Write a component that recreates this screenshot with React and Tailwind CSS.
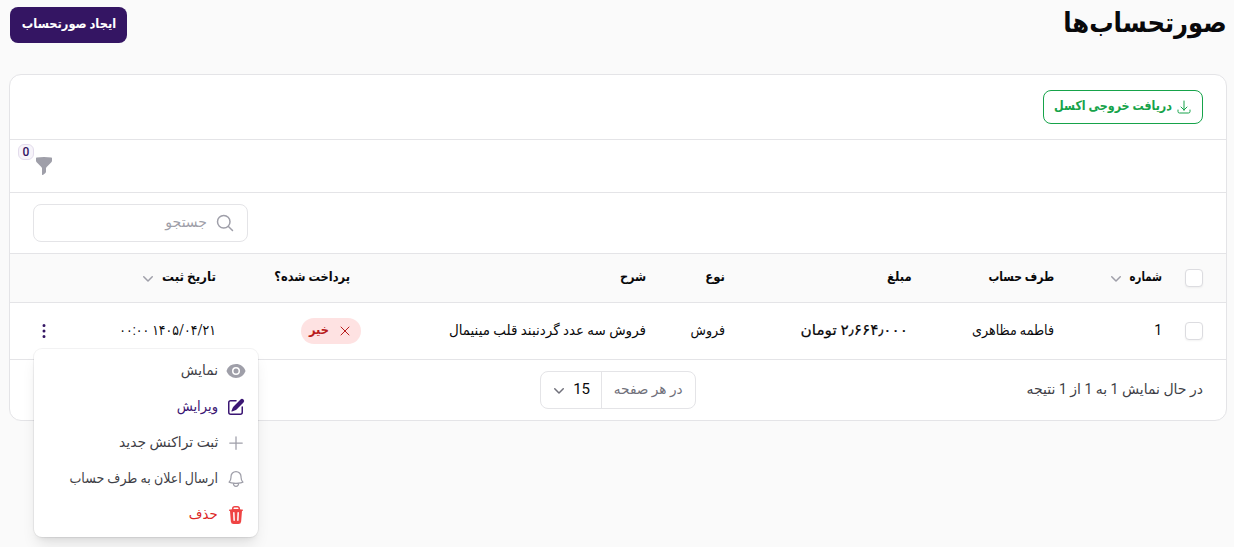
import React from 'react';
import {
    HiMiniFunnel, HiOutlineMagnifyingGlass, HiOutlinePlus, HiOutlineXMark, HiMiniChevronDown, HiOutlineBell,
    HiMiniEye, HiMiniEllipsisVertical, HiMiniPencilSquare, HiMiniTrash, HiOutlineArrowDownTray,
} from 'react-icons/hi2';

// One line of persian text, slightly condensed through scale-x classes
const Txt = ({ children, className = '' }) => (
    <span className={`block origin-right -translate-y-px whitespace-nowrap ${className}`}>{children}</span>
);

const columns = [
    { label: 'شماره', sortable: true, width: 'w-[108px]', text: 'w-8 scale-x-[0.78]' },
    { label: 'طرف حساب', width: 'w-[142px]', text: 'scale-x-[0.83]' },
    { label: 'مبلغ', width: 'w-[187px]', text: 'scale-x-[0.89]' },
    { label: 'نوع', width: 'w-[79px]', text: 'scale-x-[0.9]' },
    { label: 'شرح', width: 'w-[296px]', text: 'scale-x-[0.87]' },
    { label: 'پرداخت شده؟', width: 'w-[134px]', text: 'scale-x-[0.88]' },
    { label: 'تاریخ ثبت', sortable: true, width: 'w-[120px]', text: 'w-[54px] scale-x-[0.92]' },
];

const actions = [
    { label: 'نمایش', icon: HiMiniEye, color: 'text-zinc-700', iconColor: 'text-zinc-400', text: 'scale-x-[0.98]' },
    { label: 'ویرایش', icon: HiMiniPencilSquare, color: 'text-[#3b1673]', iconColor: 'text-[#3b1673]', text: 'scale-x-[0.94]' },
    { label: 'ثبت تراکنش جدید', icon: HiOutlinePlus, color: 'text-zinc-700', iconColor: 'text-zinc-400', text: 'scale-x-[0.99]' },
    { label: 'ارسال اعلان به طرف حساب', icon: HiOutlineBell, color: 'text-zinc-700', iconColor: 'text-zinc-400', text: 'scale-x-[0.9]' },
    { label: 'حذف', icon: HiMiniTrash, color: 'text-[#dc2626]', iconColor: 'text-[#ef4444]', text: 'scale-x-[0.94]' },
];

const Checkbox = () => <span className="block h-[18px] w-[18px] rounded border border-[#dcdce0] bg-white shadow-xs" />;

const App = () => {
    return (
        <div dir="rtl" className="relative h-[547px] overflow-hidden bg-zinc-50 font-['Roboto','DejaVu_Sans',sans-serif] text-[14px] text-zinc-950">
            <header className="flex h-[74px] items-start justify-between pr-[7px] pl-[10px]">
                <h1 className="pt-1 text-[27px] font-bold"><Txt className="scale-x-90">صورتحساب‌ها</Txt></h1>
                <button className="mt-[7px] flex h-9 w-[117px] items-center rounded-lg bg-[#341563] pr-[11px] text-[13px] font-bold text-white">
                    <Txt className="scale-x-[0.88]">ایجاد صورتحساب</Txt>
                </button>
            </header>

            <main className="mr-[7px] ml-[9px] h-[347px] overflow-hidden rounded-xl border border-zinc-200 bg-white">
                <div className="flex h-[65px] items-center border-b border-zinc-200 pr-[23px]">
                    <button className="flex h-[34px] w-[160px] items-center gap-1 rounded-lg border border-[#16a34a] pr-[10px] text-[13px] font-bold text-[#16a34a]">
                        <HiOutlineArrowDownTray className="h-4 w-4 shrink-0" />
                        <Txt className="w-[117px] scale-x-[0.857]">دریافت خروجی اکسل</Txt>
                    </button>
                </div>

                <div className="flex h-[53px] items-center justify-end border-b border-zinc-200 pl-6">
                    <span className="relative">
                        <HiMiniFunnel className="h-5 w-5 text-zinc-400" />
                        <span className="absolute -top-3 -left-4 flex h-4 w-4 items-center justify-center rounded-md border border-[#e3dcec] bg-[#f7f4fa] pb-px text-xs font-medium text-[#341563]">0</span>
                    </span>
                </div>

                <div className="flex h-[61px] items-center justify-end border-b border-zinc-200 pl-[23px]">
                    <div className="flex h-[38px] w-[215px] items-center gap-2 rounded-lg border border-zinc-200 pr-3 text-zinc-400">
                        <HiOutlineMagnifyingGlass className="h-5 w-5" strokeWidth={1.8} />
                        <Txt>جستجو</Txt>
                    </div>
                </div>

                <div className="flex h-[49px] items-center border-b border-zinc-200 bg-zinc-50 pr-[23px] text-[13px] font-bold">
                    <span className="w-[41px] shrink-0"><Checkbox /></span>
                    {columns.map((col) => (
                        <div key={col.label} className={`flex shrink-0 items-center gap-1 ${col.width}`}>
                            <Txt className={col.text}>{col.label}</Txt>
                            {col.sortable && <HiMiniChevronDown className="h-5 w-5 shrink-0 text-zinc-400" />}
                        </div>
                    ))}
                </div>

                <div className="flex h-[57px] items-center border-b border-zinc-200 pr-[23px]">
                    <span className="w-[41px] shrink-0"><Checkbox /></span>
                    <div className="w-[108px] shrink-0"><Txt>1</Txt></div>
                    <div className="w-[142px] shrink-0"><Txt className="scale-x-[0.905]">فاطمه مظاهری</Txt></div>
                    <div className="w-[187px] shrink-0 pr-1 text-[15px] [-webkit-text-stroke:0.2px]"><Txt className="scale-x-[1.02]">۲٫۶۶۴٫۰۰۰ تومان</Txt></div>
                    <div className="w-[79px] shrink-0"><Txt className="scale-x-90">فروش</Txt></div>
                    <div className="w-[296px] shrink-0"><Txt className="scale-x-[0.962]">فروش سه عدد گردنبند قلب مینیمال</Txt></div>
                    <div className="w-[134px] shrink-0">
                        <span className="-mr-[11px] flex h-[26px] w-[60px] items-center gap-2 rounded-full bg-[#fee2e2] pr-2 text-[13px] font-bold text-[#b91c1c]">
                            <HiOutlineXMark className="h-4 w-4 shrink-0" />
                            <Txt className="w-5 scale-x-[0.88]">خیر</Txt>
                        </span>
                    </div>
                    <div className="w-[162px] shrink-0"><Txt className="scale-x-[0.89]">۱۴۰۵/۰۴/۲۱ ۰۰:۰۰</Txt></div>
                    <HiMiniEllipsisVertical className="h-5 w-5 shrink-0 text-[#341563]" />
                </div>

                <div className="grid h-[60px] grid-cols-[1fr_auto_1fr] items-center px-[23px]">
                    <div className="text-zinc-700"><Txt>در حال نمایش 1 به 1 از 1 نتیجه</Txt></div>
                    <div className="flex h-[38px] w-[156px] rounded-lg border border-zinc-200">
                        <span className="flex w-[94px] shrink-0 items-center border-l border-zinc-200 pr-3 text-zinc-500"><Txt className="scale-x-[0.975]">در هر صفحه</Txt></span>
                        <span className="flex flex-1 items-center gap-1 pr-[11px] text-[15px]"><Txt>15</Txt> <HiMiniChevronDown className="h-5 w-5 shrink-0 text-zinc-500" /></span>
                    </div>
                </div>
            </main>

            {/* Row actions menu */}
            <div className="absolute top-[349px] left-[34px] h-[188px] w-[224px] rounded-lg bg-white p-1 shadow-lg ring-1 ring-zinc-950/5">
                {actions.map(({ label, icon: Icon, color, iconColor, text }) => (
                    <div key={label} className={`flex h-9 items-center gap-2 px-2 ${color}`}>
                        <Icon className={`h-5 w-5 shrink-0 ${iconColor}`} />
                        <Txt className={text}>{label}</Txt>
                    </div>
                ))}
            </div>
        </div>
    );
};

export default App;
